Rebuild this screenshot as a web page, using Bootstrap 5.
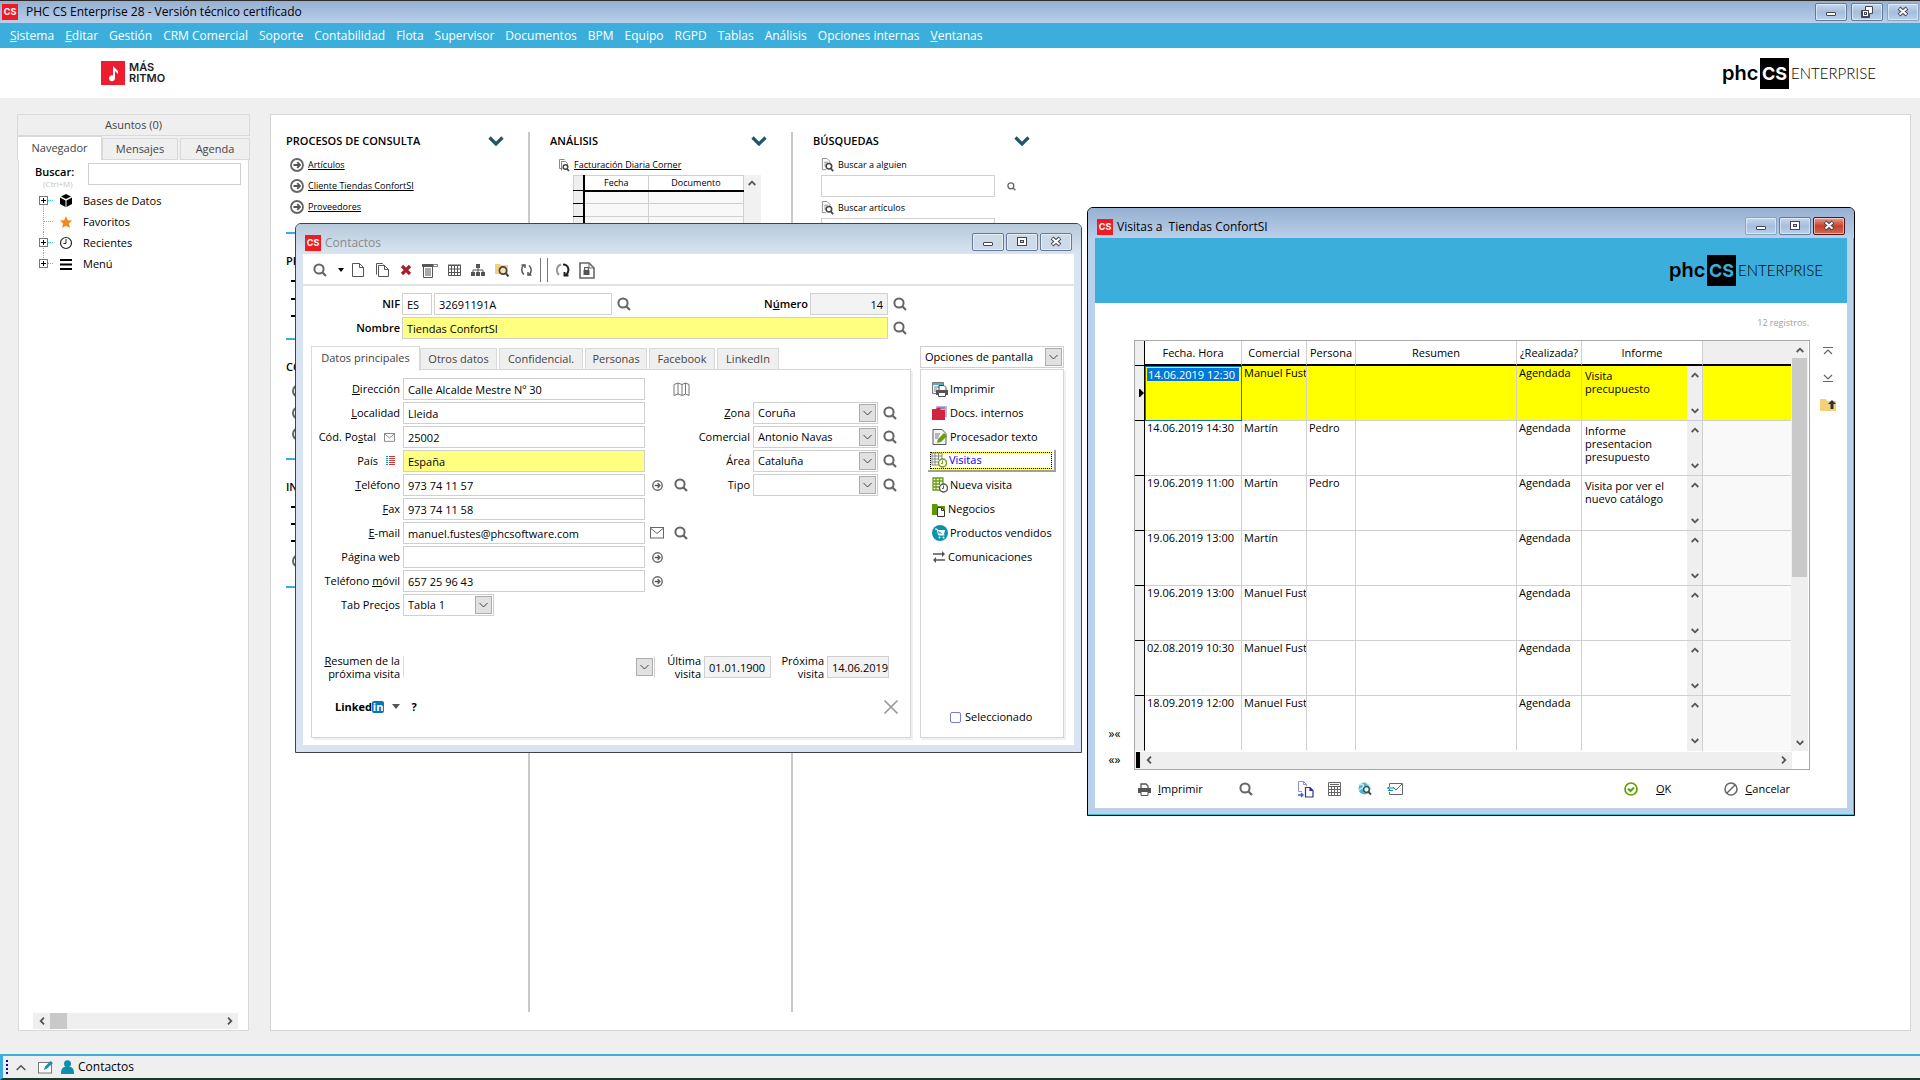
<!DOCTYPE html>
<html lang="es">
<head>
<meta charset="utf-8">
<meta name="viewport" content="width=device-width, initial-scale=1">
<title>PHC CS Enterprise 28</title>
<link rel="stylesheet" href="https://cdn.jsdelivr.net/npm/bootstrap@5.3.0/dist/css/bootstrap.min.css">
<style>
:root{--sky:#3caedc;--line:#d0d0d0;--pale:#efefef}
body{font-family:"Open Sans","Noto Sans",sans-serif;font-size:11px;line-height:14px;color:#000;background:var(--pale);border-top:1px solid #2c2c2c;min-height:100vh;overflow:hidden}
svg{display:block;flex:none}
a{color:#000}
.plain{border:0;background:none;padding:0;color:inherit;line-height:inherit;display:inline-flex;align-items:center;justify-content:center}
.titlebar{background:linear-gradient(#96b0d1,#b9cfeb)}
.app-title{height:22px;font-size:12px;padding:0 1px 0 2px}
.cs-mark{width:16px;height:16px;background:#ed1c24;color:#fff;font:bold 9px/16px Inter,sans-serif;text-align:center;flex:none}
.wbtn{width:32px;height:18px;border:1px solid #66799a;border-radius:2px;background:linear-gradient(#c5d8ee,#a5bedc 50%,#b8d0ea);padding:0;display:flex;align-items:center;justify-content:center;box-shadow:inset 0 0 0 1px #ffffff80}
.wbtn.soft{border-color:#8ba3c2}
.wbtn.red{background:linear-gradient(#e3a295,#c8402b 50%,#cf6a52);border-color:#5a1018}
.menubar{background:var(--sky);height:25px;font-size:12px;gap:11px;padding-left:10px}
.menubar a{color:#fff;text-decoration:none;white-space:nowrap}
.brandbar{height:50px;background:#fff;padding:0 43px 0 101px}
.note-tile{width:24px;height:24px;background:#ed1c2e}
.ritmo{font:600 11px/11px Inter,sans-serif;color:#222}
.phc{height:31px}
.phc-a{font:600 20px/31px Inter,sans-serif;width:38px}
.phc-b{width:29px;height:31px;background:#000;color:#fff;font:700 18px/31px Inter,sans-serif;text-align:center}
.phc-c{font:300 15px/31px Lato,sans-serif;padding-left:2px;width:88px}
.banner .phc-b{color:var(--sky)}

/* side navigator */
.side{width:233px;margin-left:17px}
.asuntos{height:22px;border:1px solid #d9d9d9;color:#444}
.tabx{border:1px solid #d9d9d9;background:var(--pale);color:#444;margin-top:2px;height:22px;padding:0;white-space:nowrap}
.tabx.on{background:#fff;border-bottom:0;margin-top:0;height:24px;padding-bottom:2px;margin-bottom:-1px;z-index:1;position:relative}
.side-tabs{height:24px}
.tab-m{width:76px;margin-right:2px}
.tab-a{width:70px}
.side-body{background:#fff;border:1px solid #d9d9d9;border-top:0;margin:0 1px}
.find-row{height:26px;padding:3px 7px 0 16px}
.find-row label{display:block;line-height:14px;padding-top:2px}
.hint{font-size:8px;line-height:9px;color:#c4c4c4;padding-left:8px}
.qbox{width:153px}
.boxed{border:1px solid var(--line);background:#fff;height:22px;padding:0 4px;line-height:20px;color:#000;border-radius:0;outline:0;min-width:0}
.yel{background:#ffff80}
.dim{background:#f3f3f3}
.tree{padding:4px 0 0 20px}
.tree-row{height:21px}
.tree-row .tw{width:20px}
.tree-row .ic{width:24px}
.hscroll{background:var(--pale);height:16px}
.hscroll button{width:17px;height:16px}
.hthumb{width:17px;background:#c9c9c9}
.side-scroll{margin:0 10px 1px 14px}

/* desktop panel */
.work{padding:16px 0 23px}
.desk{background:#fff;border:1px solid #d6d6d6;margin:0 9px 0 20px;padding:17px 15px 18px}
.dcol{width:242px}
.dcol+.dcol{border-left:2px solid #c9c9c9;width:263px;padding-left:20px}
.dhead{height:18px;font-weight:600}
.dlink{font-size:9px;height:21px;gap:4px}
.rule{border-top:2px solid var(--sky);width:200px}
.sect{padding-top:18px}
.sect .dhead{line-height:18px}
.sect-a{height:106px;margin-top:15px}
.sect-b{height:120px}
.sect-c{height:128px}
.bq{width:174px}
.mini{width:187px;table-layout:fixed;border:1px solid #b5b5b5;border-collapse:collapse;font-size:9px;margin-left:15px}
.mini th{font-weight:400;text-align:center;height:15px;line-height:13px;padding:0;border:1px solid var(--line);border-bottom:2px solid #000}
.mini td{height:13px;line-height:11px;padding:0;border:1px solid var(--line);background:#f8f8f8}
.mini .rh{border-right:2px solid #000;background:var(--pale);border-bottom:1px solid #000}
.mini .sc{background:#f1f1f1;border-color:#f1f1f1;border-bottom-width:1px}

/* floating windows */
.win{position:absolute;border-radius:6px 6px 0 0}
.wt{height:30px;border-radius:5px 5px 0 0;font-size:12px;padding:0 9px}
.wt .cs-mark,.wt>span{margin-top:8px}
.wbs{gap:2px;padding-top:5px}
.client{background:#fff;margin:0 7px 7px}
.w-contact{left:295px;top:223px;width:787px;border:1px solid #3f4348;background:#d8e4f1}
.w-contact .wt{background:linear-gradient(#b8c9db,#d8e4f1);color:#8b8b8b}
.w-contact .wbtn{background:#cddaea}
.w-contact .client{padding-bottom:7px}
.w-visit{left:1087px;top:207px;width:768px;border:1px solid #000;background:#b9d1ea;box-shadow:inset -1px -1px 0 #2cc6d8}

/* contact window */
.tools{height:32px;border-bottom:2px solid #e3e3e3;padding:2px 0 0 5px}
.tools .plain{width:24px;height:24px}
.tools .car{width:10px;margin-left:4px}
.vbars{width:8px;height:24px;border:solid #777;border-width:0 1px;margin:0 3px 0 2px}
.head-f{padding:6px 162px 0 0}
.hd-row{height:24px}
.hd-row .lab{width:99px;text-align:right;padding-right:2px;font-weight:600}
.ibtn{width:24px;height:22px}
.nif0{width:30px;margin-right:2px}
.nif1{width:178px}
.num{width:78px}
.body-f{padding:6px 10px 0 8px;gap:9px}
.maincol{width:600px}
.ctabs{height:24px;gap:2px;margin-bottom:-1px}
.ctabs .tabx.on{height:25px;margin-right:-2px}
.t1{width:109px}.t2{width:77px}.t3{width:84px}.t4{width:62px}.t5{width:66px}
.pane{border:1px solid #d5d5d5;box-shadow:2px 2px 0 #f0f0f0}
.pane-m{padding-top:8px}
.frow{height:22px;margin-bottom:2px}
.frow .lab{width:91px;padding-right:3px;display:flex;justify-content:flex-end;align-items:center;white-space:nowrap}
.frow .boxed{width:242px}
.frow .w-sm{width:91px}
.lcol{width:384px}
.rcol{padding-top:24px}
.rcol .lab{width:57px}
.rcol .boxed{width:125px}
.li{margin:0 5px 0 8px}
select.dd{appearance:none;background:#fff url("data:image/svg+xml,%3Csvg xmlns='http://www.w3.org/2000/svg' width='17' height='18'%3E%3Crect x='.5' y='.5' width='16' height='17' fill='%23e1e1e1' stroke='%23adadad'/%3E%3Cpath d='M4.500 7l4 4 4-4' fill='none' stroke='%23444'/%3E%3C/svg%3E") no-repeat right 1px center}
.vrow{margin-top:35px;height:28px}
.vrow label{text-align:right;line-height:13px;padding-right:3px}
.l1{width:91px}.l2{width:49px}.l3{width:56px}
.v1{width:252px;border-color:transparent var(--line) transparent #ddd}
.v2{width:67px}
.v3{width:62px;padding:0 0 0 4px}
.lrow{height:56px;padding:0 11px 5px 23px}
.lin{font-weight:700;text-decoration:none}
.lin span{background:#0a76b7;color:#fff;border-radius:2px;width:12px;height:12px;line-height:11px;text-align:center}
.lrow .q{font-weight:700;width:12px}
.optcol{width:144px}
.optsel{margin-bottom:1px}
.optpane{padding-top:8px}
.opt{height:22px;margin:0 7px 2px 7px;padding:0 0 0 3px;gap:2px;border:1px solid transparent;background:none;color:#000;text-align:left;display:flex;align-items:center;white-space:nowrap}
.opt.on{color:#0000f0;border:0;border-right:2px solid #a0a0a0;border-bottom:2px solid #a0a0a0;padding:2px}
.opt.on span{border:1px dotted #000;background:linear-gradient(#fff,#fff) padding-box,#ff0 border-box;height:17px;gap:2px;width:100%}
.opt .oi{width:16px}
.opt .oi-s{width:14px}
.sel-l{padding:0 0 13px 29px}
.cbx{width:11px;height:11px;margin:0;appearance:none;border:1px solid #7b7bd8;border-radius:2px;background:#fff}

/* visits window */
.banner{background:var(--sky);height:65px;padding:17px 23px 0 0}
.regs{font-size:9px;color:#a0a0a0;height:37px;padding:13px 38px 0 0}
.lside{width:39px;padding:0 0 3px;gap:12px}
.lside .plain{font-size:12px}
.gridbox{border:1px solid #a8a8a8;width:676px}
.vis{width:656px;table-layout:fixed;border-collapse:separate;border-spacing:0}
.vis th{font-weight:400;text-align:center;height:25px;padding:0;border-right:1px solid var(--line);border-bottom:2px solid #000;white-space:nowrap}
.vis td{height:55px;padding:0 0 0 2px;border-right:1px solid var(--line);border-bottom:1px solid var(--line);vertical-align:top;overflow:hidden;white-space:nowrap}
.vis .rh{background:var(--pale);border-right:1px solid #000;border-bottom:1px solid #000;padding:0;vertical-align:middle}
.vis .inf{white-space:normal;padding:3px 12px 0 3px;line-height:13px;border-right:0}
.vis .sc{background:var(--pale);padding:0}
.vis .sc .plain{width:15px;height:17px;margin:0 0 20px;display:flex}
.vis .sc .plain+.plain{margin:0;height:16px}
.vis .void{background:#f9f9f9;border-right:0}
.vis th.void{background:var(--pale)}
.vis tr.sel td:not(.rh):not(.sc){background:#ff0}
.vis tr:last-child td{border-bottom-color:transparent}
.vis tr.sel .cur{outline:1px solid #0a6fcb;outline-offset:-1px;padding:2px 2px 0}
.cur mark{background:#0078d7;color:#fff;padding:0 1px;display:block;line-height:13px}
.vbar{width:17px;background:var(--pale)}
.vbar .thumb{width:15px;height:219px;background:#c9c9c9}
.vbar .plain{width:16px;height:17px}
.gscroll{width:657px;height:17px;margin-top:1px;padding:0 0 1px 1px}
.bthumb{width:4px;background:#000}
.rside{width:36px;padding:3px 0 0;gap:11px}
.rside .plain{height:16px}
.vfoot{height:38px}
.vfoot .plain{height:22px}
.vfoot span{white-space:nowrap}
.b1{gap:7px;margin-left:43px}
.b2{margin-left:36px}.b3{margin-left:44px}.b4{margin-left:14px}.b5{margin-left:17px}.b6{margin-left:15px}
.b7{gap:18px}
.b8{gap:7px;margin:0 57px 0 53px}

/* task bar */
.task{border-top:2px solid var(--sky);border-left:3px solid var(--sky);border-bottom:2px solid #163a2b;height:26px;font-size:12px;background:var(--pale);padding-left:3px}
.task .plain{margin-left:8px}
</style>
</head>
<body class="d-flex flex-column">
<svg width="0" height="0" class="position-absolute" aria-hidden="true">
<symbol id="i-search" viewBox="0 0 14 14"><circle cx="6" cy="6" r="4.600" fill="none" stroke="#666" stroke-width="2"/><path d="M9.500 9.500l3.500 3.500" stroke="#666" stroke-width="2.200"/></symbol>
<symbol id="i-goto" viewBox="0 0 14 14"><circle cx="7" cy="7" r="6" fill="none" stroke="#666" stroke-width="1.800"/><path d="M3.500 7h6M7.200 4.200L10 7 7.200 9.800" fill="none" stroke="#555" stroke-width="1.800"/></symbol>
<symbol id="i-chev" viewBox="0 0 16 10"><path d="M1.500 1.500L8 8l6.500-6.500" fill="none" stroke="#1f566b" stroke-width="3.200"/></symbol>
<symbol id="i-up" viewBox="0 0 8 6"><path d="M.7 5L4 1.700 7.300 5" fill="none" stroke="#555" stroke-width="1.800"/></symbol>
<symbol id="i-down" viewBox="0 0 8 6"><path d="M.7 1L4 4.300 7.300 1" fill="none" stroke="#555" stroke-width="1.800"/></symbol>
<symbol id="i-left" viewBox="0 0 6 8"><path d="M5 .7L1.700 4 5 7.300" fill="none" stroke="#555" stroke-width="1.800"/></symbol>
<symbol id="i-right" viewBox="0 0 6 8"><path d="M1 .7L4.300 4 1 7.300" fill="none" stroke="#555" stroke-width="1.800"/></symbol>
<symbol id="w-min" viewBox="0 0 12 12"><rect x="1.500" y="6.500" width="9" height="3" rx=".5" fill="#fff" stroke="#445" /></symbol>
<symbol id="w-max" viewBox="0 0 12 12"><rect x="1.500" y="1.500" width="9" height="8" fill="#fff" stroke="#445"/><rect x="4.500" y="4.500" width="3" height="2" fill="#b5c8e0" stroke="#445"/></symbol>
<symbol id="w-res" viewBox="0 0 12 12"><path d="M4.500.5h7v7h-3v4h-8v-7h4z" fill="#fff" stroke="#445"/><rect x="1.500" y="4.500" width="6" height="6" fill="#fff" stroke="#445"/><rect x="3.500" y="6.500" width="2" height="2" fill="none" stroke="#445"/></symbol>
<symbol id="w-x" viewBox="0 0 12 12"><path d="M2 2l8 7M10 2l-8 7" stroke="#445" stroke-width="4"/><path d="M2.500 2.500l7 6M9.500 2.500l-7 6" stroke="#fff" stroke-width="2"/></symbol>
<symbol id="i-mail" viewBox="0 0 14 12"><rect x=".5" y=".5" width="13" height="10.500" fill="none" stroke="#666"/><path d="M1 1.500l6 5 6-5" fill="none" stroke="#666"/></symbol>
<symbol id="i-plus" viewBox="0 0 9 9"><rect x=".5" y=".5" width="8" height="8" fill="#fff" stroke="#777"/><path d="M2 4.500h5M4.500 2v5" stroke="#000"/></symbol>
<symbol id="i-finddoc" viewBox="0 0 14 15"><path d="M9.500 6V3.500L6.500.5h-5v12h4" fill="none" stroke="#888"/><path d="M3.500 4.500h4M3.500 6.500h3M3.500 8.500h2" stroke="#888"/><circle cx="8.500" cy="8.800" r="3" fill="#fff" stroke="#444" stroke-width="1.700"/><path d="M10.500 11l2.500 3" stroke="#444" stroke-width="2"/></symbol>
<symbol id="i-folder" viewBox="0 0 16 14"><path d="M0 1h6l1 2h9v10H0z" fill="#f4d07a"/></symbol>
</svg>

<header>
  <div class="titlebar app-title d-flex align-items-center">
    <span class="cs-mark" aria-hidden="true">CS</span><span class="ps-2 me-auto">PHC CS Enterprise 28 - Versión técnico certificado</span>
    <div class="d-flex gap-1">
      <button class="wbtn" aria-label="Minimizar"><svg width="12" height="12"><use href="#w-min"/></svg></button>
      <button class="wbtn" aria-label="Restaurar"><svg width="12" height="12"><use href="#w-res"/></svg></button>
      <button class="wbtn soft" aria-label="Cerrar"><svg width="12" height="12"><use href="#w-x"/></svg></button>
    </div>
  </div>
  <nav class="menubar d-flex align-items-center">
    <a href="#"><u>S</u>istema</a><a href="#"><u>E</u>ditar</a><a href="#">Gestión</a><a href="#">CRM Comercial</a><a href="#">Soporte</a><a href="#">Contabilidad</a><a href="#">Flota</a><a href="#">Supervisor</a><a href="#">Documentos</a><a href="#">BPM</a><a href="#">Equipo</a><a href="#">RGPD</a><a href="#">Tablas</a><a href="#">Análisis</a><a href="#">Opciones internas</a><a href="#"><u>V</u>entanas</a>
  </nav>
  <div class="brandbar d-flex align-items-center justify-content-between">
    <div class="d-flex align-items-center gap-1">
      <span class="note-tile"><svg width="24" height="24" viewBox="0 0 24 24"><path d="M12 5l5 5v3l-3-3v7a3 3 0 1 1-2-2.500z" fill="#fff"/></svg></span>
      <span class="ritmo">MÁS<br>RITMO</span>
    </div>
    <div class="phc d-flex"><span class="phc-a">phc</span><span class="phc-b">CS</span><span class="phc-c">ENTERPRISE</span></div>
  </div>
</header>

<main class="work d-flex flex-grow-1">
  <aside class="side d-flex flex-column">
    <div class="asuntos d-flex align-items-center justify-content-center">Asuntos (0)</div>
    <div class="side-tabs d-flex">
      <button class="tabx on flex-grow-1">Navegador</button><button class="tabx tab-m">Mensajes</button><button class="tabx tab-a">Agenda</button>
    </div>
    <div class="side-body flex-grow-1 d-flex flex-column">
      <div class="find-row d-flex">
        <div><label for="q" class="fw-semibold">Buscar:</label><div class="hint">(Ctrl+M)</div></div>
        <input id="q" class="boxed ms-auto qbox">
      </div>
      <div class="tree">
        <div class="tree-row d-flex align-items-center"><span class="tw"><svg width="22" height="21" viewBox="0 0 22 21"><path d="M4.500 10.500V21M9 10.500h6" stroke="#19d8e8" stroke-dasharray="1 1"/><use href="#i-plus" y="6" width="9" height="9"/></svg></span><span class="ic"><svg width="14" height="14" viewBox="0 0 14 14"><path d="M7 0l5 2.500L7 5 2 2.500zM1 3.500l5.500 3V13L1 10zM13 3.500l-5.500 3V13l5.500-3z"/></svg></span>Bases de Datos</div>
        <div class="tree-row d-flex align-items-center"><span class="tw"><svg width="22" height="21" viewBox="0 0 22 21"><path d="M4.500 0V21M5 10.500h10" stroke="#19d8e8" stroke-dasharray="1 1"/></svg></span><span class="ic"><svg width="14" height="14" viewBox="0 0 14 14"><path d="M7 1l1.800 4.200 4.500.4-3.400 3 1 4.400L7 10.700 3.100 13l1-4.400-3.400-3 4.500-.4z" fill="#f08a1d"/></svg></span>Favoritos</div>
        <div class="tree-row d-flex align-items-center"><span class="tw"><svg width="22" height="21" viewBox="0 0 22 21"><path d="M4.500 0V21M9 10.500h6" stroke="#19d8e8" stroke-dasharray="1 1"/><use href="#i-plus" y="6" width="9" height="9"/></svg></span><span class="ic"><svg width="14" height="14" viewBox="0 0 14 14"><circle cx="7" cy="7" r="5.500" fill="none" stroke="#222" stroke-width="1.200"/><path d="M7 3v4.500H4.500" fill="none" stroke="#222"/></svg></span>Recientes</div>
        <div class="tree-row d-flex align-items-center"><span class="tw"><svg width="22" height="21" viewBox="0 0 22 21"><path d="M4.500 0V10M9 10.500h6" stroke="#19d8e8" stroke-dasharray="1 1"/><use href="#i-plus" y="6" width="9" height="9"/></svg></span><span class="ic"><svg width="14" height="14" viewBox="0 0 14 14"><path d="M1 3h12M1 7.500h12M1 12h12" stroke="#000" stroke-width="2"/></svg></span>Menú</div>
      </div>
      <div class="hscroll side-scroll d-flex mt-auto" aria-hidden="true"><button class="plain" tabindex="-1"><svg width="6" height="8"><use href="#i-left"/></svg></button><span class="hthumb"></span><button class="plain ms-auto" tabindex="-1"><svg width="6" height="8"><use href="#i-right"/></svg></button></div>
    </div>
  </aside>

  <section class="desk flex-grow-1 d-flex">
    <div class="dcol">
      <div class="dhead d-flex justify-content-between align-items-center"><span>PROCESOS DE CONSULTA</span><svg class="me-4" width="16" height="10"><use href="#i-chev"/></svg></div>
      <div class="ps-1 pt-1">
        <div class="dlink d-flex align-items-center"><svg width="14" height="14"><use href="#i-goto"/></svg><a href="#">Artículos</a></div>
        <div class="dlink d-flex align-items-center"><svg width="14" height="14"><use href="#i-goto"/></svg><a href="#">Cliente Tiendas ConfortSI</a></div>
        <div class="dlink d-flex align-items-center"><svg width="14" height="14"><use href="#i-goto"/></svg><a href="#">Proveedores</a></div>
      </div>
      <div class="rule sect sect-a"><div class="dhead">PR</div><svg width="12" height="60" viewBox="0 0 12 60"><path d="M5 11h7M5 29h7M5 46h7" stroke="#000" stroke-width="2"/></svg></div>
      <div class="rule sect sect-b"><div class="dhead">CO</div><svg width="20" height="74" viewBox="0 0 20 74"><g fill="none" stroke="#666" stroke-width="2"><circle cx="13" cy="15" r="6"/><circle cx="13" cy="37" r="6"/><circle cx="13" cy="58" r="6"/></g></svg></div>
      <div class="rule sect sect-c"><div class="dhead">IN</div><svg width="20" height="74" viewBox="0 0 20 74"><path d="M5 11h7M5 28h7M5 45h7" stroke="#000" stroke-width="2"/><circle cx="13" cy="65" r="6" fill="none" stroke="#666" stroke-width="2"/></svg></div>
      <div class="rule"></div>
    </div>
    <div class="dcol">
      <div class="dhead d-flex justify-content-between align-items-center"><span>ANÁLISIS</span><svg class="me-4" width="16" height="10"><use href="#i-chev"/></svg></div>
      <div class="ps-2 pt-1">
        <div class="dlink d-flex align-items-center"><svg width="12" height="14" viewBox="0 0 12 14"><path d="M4.500 10.500h-3v-9h5" fill="none" stroke="#888"/><path d="M3.500 12.500v-9h4l2 2v2" fill="none" stroke="#888"/><circle cx="7.500" cy="9" r="2.300" fill="none" stroke="#444" stroke-width="1.400"/><path d="M9 11l2 2" stroke="#444" stroke-width="1.700"/></svg><a href="#">Facturación Diaria Corner</a></div>
        <table class="mini">
          <colgroup><col width="10"><col width="65"><col width="95"><col width="17"></colgroup>
          <thead><tr><th class="rh"></th><th>Fecha</th><th>Documento</th><th class="sc"><svg class="mx-auto" width="8" height="6"><use href="#i-up"/></svg></th></tr></thead>
          <tbody><tr><td class="rh"></td><td></td><td></td><td class="sc"></td></tr><tr><td class="rh"></td><td></td><td></td><td class="sc"></td></tr><tr><td class="rh"></td><td></td><td></td><td class="sc"></td></tr></tbody>
        </table>
      </div>
    </div>
    <div class="dcol">
      <div class="dhead d-flex justify-content-between align-items-center"><span>BÚSQUEDAS</span><svg class="me-4" width="16" height="10"><use href="#i-chev"/></svg></div>
      <div class="ps-2 pt-1">
        <div class="dlink d-flex align-items-center"><svg width="13" height="14"><use href="#i-finddoc"/></svg><label for="b1">Buscar a alguien</label></div>
        <div class="d-flex align-items-center"><input id="b1" class="boxed bq"><button class="plain ms-1 ibtn" aria-label="Buscar"><svg width="9" height="9"><use href="#i-search"/></svg></button></div>
        <div class="dlink d-flex align-items-center"><svg width="13" height="14"><use href="#i-finddoc"/></svg><label for="b2">Buscar artículos</label></div>
        <input id="b2" class="boxed bq">
      </div>
    </div>
  </section>
</main>

<footer class="task d-flex align-items-center">
  <svg width="2" height="14" viewBox="0 0 2 14"><path d="M1 0v14" stroke="#00c" stroke-width="2" stroke-dasharray="2 2"/></svg>
  <button class="plain" aria-label="Mostrar"><svg width="10" height="7" viewBox="0 0 10 7"><path d="M.7 6L5 1.700 9.300 6" fill="none" stroke="#555" stroke-width="1.500"/></svg></button>
  <button class="plain ps-1" aria-label="Editar"><svg width="15" height="14" viewBox="0 0 15 14"><rect x=".5" y="2.500" width="13" height="10.500" fill="#fff" stroke="#777"/><path d="M6 10l1-3.500L12.500 1 15 3 9 8.500z" fill="#1a93b3"/></svg></button>
  <button class="plain gap-1"><svg width="13" height="14" viewBox="0 0 13 14"><circle cx="6.500" cy="3.800" r="3.500" fill="#0b8fb0"/><path d="M0 14c0-5 1.500-7 4-7h5c2.500 0 4 2 4 7z" fill="#0b8fb0"/></svg><span>Contactos</span></button>
</footer>

<section class="win w-contact" aria-label="Contactos">
  <div class="wt d-flex align-items-center">
    <span class="cs-mark" aria-hidden="true">CS</span><span class="ps-1 me-auto">Contactos</span>
    <div class="wbs d-flex"><button class="wbtn" aria-label="Minimizar"><svg width="12" height="12"><use href="#w-min"/></svg></button><button class="wbtn" aria-label="Maximizar"><svg width="12" height="12"><use href="#w-max"/></svg></button><button class="wbtn" aria-label="Cerrar"><svg width="12" height="12"><use href="#w-x"/></svg></button></div>
  </div>
  <div class="client">
    <div class="tools d-flex align-items-center">
      <button class="plain" aria-label="Buscar"><svg width="14" height="14"><use href="#i-search"/></svg></button>
      <button class="plain car" aria-label="Más"><svg width="6" height="4" viewBox="0 0 6 4"><path d="M0 0h6L3 4z"/></svg></button>
      <button class="plain" aria-label="Nuevo"><svg width="14" height="16" viewBox="0 0 14 16"><path d="M1.500 1.500h7l4 4v9h-11zM8.500 1.500v4h4" fill="none" stroke="#555"/></svg></button>
      <button class="plain" aria-label="Copiar"><svg width="14" height="16" viewBox="0 0 14 16"><path d="M3.500 3.500h6l4 4v7h-10zM9.500 3.500v4h4M1.500 12.500v-11h6l1 1" fill="none" stroke="#555"/></svg></button>
      <button class="plain" aria-label="Eliminar"><svg width="12" height="12" viewBox="0 0 12 12"><path d="M2 2l8 8M10 2l-8 8" stroke="#a8202c" stroke-width="3.200"/></svg></button>
      <button class="plain" aria-label="Lista"><svg width="16" height="15" viewBox="0 0 16 15"><path d="M1.500 3.500v11h9v-11" fill="#fff" stroke="#555"/><path d="M0 1h11v3H0z" fill="#555"/><path d="M3 6h6M3 8h6M3 10h6M3 12h6" stroke="#555"/><rect x="11.500" y="1.500" width="4" height="2" fill="#fff" stroke="#888"/></svg></button>
      <button class="plain" aria-label="Tabla"><svg width="13" height="12" viewBox="0 0 13 12"><path d="M.5 1.500h12v10H.5zM.5 5h12M.5 8.500h12M3.500 2v9M6.500 2v9M9.500 2v9M0 1h13" fill="none" stroke="#555"/></svg></button>
      <button class="plain" aria-label="Jerarquía"><svg width="14" height="14" viewBox="0 0 14 14"><path d="M5 1h4v4H5zM0 9h4v4H0zM5 9h4v4H5zM10 9h4v4h-4z" fill="#555"/><path d="M7 4v5M2 9V7h10v2" fill="none" stroke="#555"/></svg></button>
      <button class="plain" aria-label="Buscar en carpeta"><svg width="15" height="14" viewBox="0 0 15 14"><path d="M0 1h5l1 1h7v9H0z" fill="#f4d07a"/><circle cx="8" cy="7.500" r="3.600" fill="#f8e4ae" stroke="#444" stroke-width="1.700"/><path d="M10.500 10l3 3.500" stroke="#444" stroke-width="2"/></svg></button>
      <button class="plain" aria-label="Actualizar"><svg width="13" height="14" viewBox="0 0 13 14"><path d="M4 11.500C1 9 1 4.500 4 2M1.500 2H5v3M9 2.500c3 2.500 3 6.500 0 9.500M11.500 12H8V9" fill="none" stroke="#555" stroke-width="1.500"/></svg></button>
      <span class="vbars"></span>
      <button class="plain" aria-label="Sincronizar"><svg width="14" height="14" viewBox="0 0 14 14"><path d="M5 1.500C0 3 0 9 3 12" fill="none" stroke="#999" stroke-width="2"/><path d="M7 1.500c6 0 7 7 3 10.500M12.500 12.500H8.500V9" fill="none" stroke="#222" stroke-width="2"/></svg></button>
      <button class="plain" aria-label="Bloquear"><svg width="16" height="17" viewBox="0 0 16 17"><path d="M1 1h9l5 5v10H1z" fill="#fff" stroke="#666" stroke-width="1.600"/><path d="M10 1v5h5" fill="none" stroke="#666"/><path d="M4.500 8h6v5h-6z" fill="#555"/><path d="M5.700 8V5.500h3.600V8" fill="none" stroke="#555" stroke-width="1.200"/></svg></button>
    </div>
    <div class="head-f">
      <div class="hd-row d-flex align-items-center"><label class="lab" for="nif">NIF</label><input class="boxed nif0" aria-label="País NIF" value="ES"><input id="nif" class="boxed nif1" value="32691191A"><button class="plain ibtn" aria-label="Buscar NIF"><svg width="14" height="14"><use href="#i-search"/></svg></button>
        <label class="lab ms-auto" for="num">N<u>ú</u>mero</label><input id="num" class="boxed dim num text-end pe-1" value="14"><button class="plain ibtn" aria-label="Buscar número"><svg width="14" height="14"><use href="#i-search"/></svg></button></div>
      <div class="hd-row d-flex align-items-center"><label class="lab" for="nom">Nombre</label><input id="nom" class="boxed yel flex-grow-1" value="Tiendas ConfortSI"><button class="plain ibtn" aria-label="Buscar nombre"><svg width="14" height="14"><use href="#i-search"/></svg></button></div>
    </div>
    <div class="d-flex body-f">
      <div class="maincol">
        <div class="ctabs d-flex"><button class="tabx on t1">Datos principales</button><button class="tabx t2">Otros datos</button><button class="tabx t3">Confidencial.</button><button class="tabx t4">Personas</button><button class="tabx t5">Facebook</button><button class="tabx t4">LinkedIn</button></div>
        <div class="pane pane-m">
          <div class="d-flex">
            <div class="lcol">
              <div class="frow d-flex"><label class="lab" for="f1"><span><u>D</u>irección</span></label><input id="f1" class="boxed" value="Calle Alcalde Mestre Nº 30"><span class="ibtn"></span><button class="plain ibtn" aria-label="Mapa"><svg width="17" height="15" viewBox="0 0 17 15"><path d="M1 2.500l4-1.500 4 1.500L12.500 1 16 2.500v11L12.500 12 9 13.500 5 12l-4 1.500zM5 1v11M9 2.500v11M12.500 1v11" fill="none" stroke="#777"/></svg></button></div>
              <div class="frow d-flex"><label class="lab" for="f2"><span><u>L</u>ocalidad</span></label><input id="f2" class="boxed" value="Lleida"></div>
              <div class="frow d-flex"><label class="lab" for="f3"><span>Cód. Po<u>s</u>tal</span><svg class="li" width="11" height="9"><use href="#i-mail"/></svg></label><input id="f3" class="boxed" value="25002"></div>
              <div class="frow d-flex"><label class="lab" for="f4"><span>País</span><svg class="li" width="9" height="10" viewBox="0 0 9 10"><path d="M0 .5h2M0 2.500h2M0 4.500h2M0 6.500h2M0 8.500h2" stroke="#1a93b3"/><path d="M3 .5h6M3 2.500h6M3 4.500h6M3 6.500h6M3 8.500h6" stroke="#c43a3a"/></svg></label><input id="f4" class="boxed yel" value="España"></div>
              <div class="frow d-flex"><label class="lab" for="f5"><span><u>T</u>eléfono</span></label><input id="f5" class="boxed" value="973 74 11 57"><button class="plain ibtn" aria-label="Llamar"><svg width="11" height="11"><use href="#i-goto"/></svg></button><button class="plain ibtn" aria-label="Buscar"><svg width="14" height="14"><use href="#i-search"/></svg></button></div>
              <div class="frow d-flex"><label class="lab" for="f6"><span><u>F</u>ax</span></label><input id="f6" class="boxed" value="973 74 11 58"></div>
              <div class="frow d-flex"><label class="lab" for="f7"><span><u>E</u>-mail</span></label><input id="f7" class="boxed" value="manuel.fustes@phcsoftware.com"><button class="plain ibtn" aria-label="Enviar"><svg width="14" height="12"><use href="#i-mail"/></svg></button><button class="plain ibtn" aria-label="Buscar"><svg width="14" height="14"><use href="#i-search"/></svg></button></div>
              <div class="frow d-flex"><label class="lab" for="f8"><span>Página web</span></label><input id="f8" class="boxed"><button class="plain ibtn" aria-label="Abrir"><svg width="11" height="11"><use href="#i-goto"/></svg></button></div>
              <div class="frow d-flex"><label class="lab" for="f9"><span>Teléfono <u>m</u>óvil</span></label><input id="f9" class="boxed" value="657 25 96 43"><button class="plain ibtn" aria-label="Llamar"><svg width="11" height="11"><use href="#i-goto"/></svg></button></div>
              <div class="frow d-flex"><label class="lab" for="f10"><span>Tab Prec<u>i</u>os</span></label><select id="f10" class="boxed dd w-sm"><option>Tabla 1</option></select></div>
            </div>
            <div class="rcol">
              <div class="frow d-flex"><label class="lab" for="r1"><span><u>Z</u>ona</span></label><select id="r1" class="boxed dd"><option>Coruña</option></select><button class="plain ibtn" aria-label="Buscar"><svg width="14" height="14"><use href="#i-search"/></svg></button></div>
              <div class="frow d-flex"><label class="lab" for="r2">Comercial</label><select id="r2" class="boxed dd"><option>Antonio Navas</option></select><button class="plain ibtn" aria-label="Buscar"><svg width="14" height="14"><use href="#i-search"/></svg></button></div>
              <div class="frow d-flex"><label class="lab" for="r3">Área</label><select id="r3" class="boxed dd"><option>Cataluña</option></select><button class="plain ibtn" aria-label="Buscar"><svg width="14" height="14"><use href="#i-search"/></svg></button></div>
              <div class="frow d-flex"><label class="lab" for="r4">Tipo</label><select id="r4" class="boxed dd"><option></option></select><button class="plain ibtn" aria-label="Buscar"><svg width="14" height="14"><use href="#i-search"/></svg></button></div>
            </div>
          </div>
          <div class="vrow d-flex align-items-center">
            <label class="l1" for="v1"><u>R</u>esumen de la<br>próxima visita</label><select id="v1" class="boxed dd v1"><option></option></select>
            <label class="l2" for="v2">Última<br>visita</label><input id="v2" class="boxed dim v2" value="01.01.1900">
            <label class="l3" for="v3">Próxima<br>visita</label><input id="v3" class="boxed dim v3" value="14.06.2019">
          </div>
          <div class="lrow d-flex align-items-center">
            <a class="lin d-flex align-items-center" href="#">Linked<span>in</span></a>
            <button class="plain ibtn" aria-label="Opciones de LinkedIn"><svg width="8" height="5" viewBox="0 0 8 5"><path d="M0 0h8L4 5z" fill="#555"/></svg></button>
            <button class="plain q">?</button>
            <button class="plain ms-auto" aria-label="Cerrar"><svg width="16" height="16" viewBox="0 0 16 16"><path d="M1.500 1.500l13 13M14.500 1.500l-13 13" stroke="#999" stroke-width="1.700"/></svg></button>
          </div>
        </div>
      </div>
      <div class="optcol d-flex flex-column">
        <select class="boxed dd optsel" aria-label="Opciones"><option>Opciones de pantalla</option></select>
        <div class="pane flex-grow-1 d-flex flex-column optpane">
          <button class="opt"><svg class="oi" width="16" height="16" viewBox="0 0 16 16"><path d="M.5 1.500h11v11H.5z" fill="#e9f4f8" stroke="#777"/><path d="M1 2h10v2H1z" fill="#4fb0c8"/><path d="M2 6h5M2 8h3M2 10h3" stroke="#888"/><path d="M7 9V4.500h5l2 2V9" fill="#fff" stroke="#444"/><path d="M4 9h12v5H4z" fill="#555"/><path d="M6.500 11.500h7v4h-7z" fill="#fff" stroke="#555"/></svg>Imprimir</button>
          <button class="opt"><svg class="oi" width="16" height="16" viewBox="0 0 16 16"><path d="M4 1h11v11H4z" fill="#b9b4dc"/><path d="M5 2h8v2H5z" fill="#8d88b8"/><path d="M0 4h4l1-1h3l1 2h4v10H0z" fill="#d0243f"/></svg>Docs. internos</button>
          <button class="opt"><svg class="oi" width="16" height="16" viewBox="0 0 16 16"><path d="M1 .5h9l4 4v11H1z" fill="#f4f4f4" stroke="#555"/><path d="M3 5h5M3 7h4M3 9h3" stroke="#777"/><path d="M5 14l1-4 6-6 3 3-6 6z" fill="#6a9d12"/></svg>Procesador texto</button>
          <button class="opt on"><span class="d-flex align-items-center"><svg class="oi" width="16" height="16" viewBox="0 0 16 16"><path d="M1 1h10v12H1zM1 4h10M1 7h7M1 10h6M4 1v12M7.500 1v7" fill="none" stroke="#888"/><circle cx="11.500" cy="11" r="4" fill="#fff" stroke="#6a9d12" stroke-width="1.400"/><path d="M11.500 8.500v3H10" fill="none" stroke="#6a9d12"/></svg>Visitas</span></button>
          <button class="opt"><svg class="oi" width="16" height="16" viewBox="0 0 16 16"><path d="M1 1h10v12H1zM1 4h10M1 7h7M1 10h6M4 1v12M7.500 1v7" fill="none" stroke="#6a9d12" stroke-width="1.300"/><circle cx="11.500" cy="11" r="4" fill="#fff" stroke="#555" stroke-width="1.400"/><path d="M11.500 8.500v3H10" fill="none" stroke="#555"/></svg>Nueva visita</button>
          <button class="opt"><svg class="oi oi-s" width="14" height="15" viewBox="0 0 14 15"><path d="M0 2h5l1 2h7v9H0z" fill="#5f9800"/><path d="M5.500 5.500h4l3 3v6h-7z" fill="#fff" stroke="#333"/><path d="M9.500 5.500v3h3" fill="none" stroke="#333"/></svg>Negocios</button>
          <button class="opt"><svg class="oi" width="16" height="16" viewBox="0 0 16 16"><circle cx="8" cy="8" r="8" fill="#0a93ae"/><path d="M3 4h2l1.500 6h6M5.500 5.500h7l-1 3.500h-5.200" fill="#fff" stroke="#fff"/><circle cx="7.500" cy="12.500" r="1" fill="#fff"/><circle cx="11.500" cy="12.500" r="1" fill="#fff"/></svg>Productos vendidos</button>
          <button class="opt"><svg class="oi oi-s" width="14" height="12" viewBox="0 0 14 12"><path d="M1 3h10M3 9h10" stroke="#555" stroke-width="1.300"/><path d="M10 0l3 3-3 3zM4 6L1 9l3 3z" fill="#555"/></svg>Comunicaciones</button>
          <label class="sel-l mt-auto d-flex align-items-center gap-1"><input type="checkbox" class="cbx">Seleccionado</label>
        </div>
      </div>
    </div>
  </div>
</section>

<section class="win w-visit" aria-label="Visitas">
  <div class="wt titlebar d-flex align-items-center">
    <span class="cs-mark" aria-hidden="true">CS</span><span class="ps-1 me-auto">Visitas a &nbsp;Tiendas ConfortSI</span>
    <div class="wbs d-flex"><button class="wbtn soft" aria-label="Minimizar"><svg width="12" height="12"><use href="#w-min"/></svg></button><button class="wbtn" aria-label="Maximizar"><svg width="12" height="12"><use href="#w-max"/></svg></button><button class="wbtn red" aria-label="Cerrar"><svg width="12" height="12"><use href="#w-x"/></svg></button></div>
  </div>
  <div class="client">
    <div class="banner d-flex justify-content-end"><div class="phc d-flex"><span class="phc-a">phc</span><span class="phc-b">CS</span><span class="phc-c">ENTERPRISE</span></div></div>
    <div class="regs text-end">12 registros.</div>
    <div class="d-flex">
      <div class="lside d-flex flex-column justify-content-end align-items-center"><button class="plain">»«</button><button class="plain">«»</button></div>
      <div class="gridbox">
        <div class="d-flex">
          <table class="vis">
            <colgroup><col width="10"><col width="97"><col width="65"><col width="49"><col width="161"><col width="65"><col width="105"><col width="16"><col></colgroup>
            <thead><tr><th class="rh"></th><th>Fecha. Hora</th><th>Comercial</th><th>Persona</th><th>Resumen</th><th>¿Realizada?</th><th colspan="2">Informe</th><th class="void"></th></tr></thead>
            <tbody id="rows"></tbody>
          </table>
          <div class="vbar d-flex flex-column align-items-center" aria-hidden="true"><button class="plain" tabindex="-1"><svg width="8" height="6"><use href="#i-up"/></svg></button><span class="thumb"></span><button class="plain mt-auto" tabindex="-1"><svg width="8" height="6"><use href="#i-down"/></svg></button></div>
        </div>
        <div class="hscroll d-flex gscroll" aria-hidden="true"><span class="bthumb"></span><button class="plain" tabindex="-1"><svg width="6" height="8"><use href="#i-left"/></svg></button><button class="plain ms-auto" tabindex="-1"><svg width="6" height="8"><use href="#i-right"/></svg></button></div>
      </div>
      <div class="rside d-flex flex-column">
        <button class="plain" aria-label="Primero"><svg width="10" height="8" viewBox="0 0 10 8"><path d="M0 .5h10M1 7l4-4 4 4" fill="none" stroke="#666" stroke-width="1.200"/></svg></button>
        <button class="plain" aria-label="Último"><svg width="10" height="8" viewBox="0 0 10 8"><path d="M0 7.500h10M1 1l4 4 4-4" fill="none" stroke="#666" stroke-width="1.200"/></svg></button>
        <button class="plain" aria-label="Subir carpeta"><svg width="16" height="14" viewBox="0 0 16 14"><use href="#i-folder"/><path d="M12 2l4 4h-2.500v5h-3V6H8z" fill="#333"/></svg></button>
      </div>
    </div>
    <div class="vfoot d-flex align-items-center">
      <button class="plain b1"><svg width="13" height="13" viewBox="0 0 13 13"><path d="M3 5V1h5l2 2v2" fill="#fff" stroke="#555" stroke-width="1.300"/><path d="M0 5h13v5H0z" fill="#555"/><path d="M3 8.500h7v4H3z" fill="#fff" stroke="#555"/></svg><span><u>I</u>mprimir</span></button>
      <button class="plain b2" aria-label="Buscar"><svg width="14" height="14"><use href="#i-search"/></svg></button>
      <button class="plain b3" aria-label="Copiar"><svg width="17" height="17" viewBox="0 0 17 17"><path d="M5 10.500H1.500V.5h5l3 3V5M6.500.5v3h3" fill="none" stroke="#8d8fe0"/><path d="M8.500 6.500h4.500l3 3v6.500H8.500zM13 6.500v3h3" fill="#fff" stroke="#2c3290" stroke-width="1.200"/><path d="M1 14h5M4 12l2 2-2 2" fill="none" stroke="#3a62c0" stroke-width="1.300"/></svg></button>
      <button class="plain b4" aria-label="Calcular"><svg width="13" height="14" viewBox="0 0 13 14"><path d="M.5.5h12v13H.5zM.5 4.500h12M.5 7.500h12M.5 10.500h12M3.500 5v9M6.500 5v9M9.500 5v9M2 2.500h9" fill="none" stroke="#666"/></svg></button>
      <button class="plain b5" aria-label="Web"><svg width="14" height="14" viewBox="0 0 14 14"><circle cx="6.500" cy="6.500" r="6" fill="#4fb3cf"/><path d="M2 3c3-2 4 0 3 2S2 7 1 8M8 1c3 1 4 3 4 5" fill="none" stroke="#cdebf3" stroke-width="1.500"/><circle cx="8.500" cy="7.500" r="2.800" fill="#dff3f8" stroke="#444" stroke-width="1.300"/><path d="M10.500 10l2.500 2.500" stroke="#444" stroke-width="1.800"/></svg></button>
      <button class="plain b6" aria-label="Enviar"><svg width="16" height="12" viewBox="0 0 16 12"><path d="M2.500 3V.5h13v11h-13V9M6 4l3 3 6-6" fill="none" stroke="#666"/><path d="M0 5h7M1 7.500h5M3 3L1 5l2 2" fill="none" stroke="#0a8fa8"/></svg></button>
      <button class="plain b7 ms-auto"><svg width="14" height="14" viewBox="0 0 14 14"><circle cx="7" cy="7" r="6" fill="#fff" stroke="#5f9f00" stroke-width="1.700"/><path d="M4 6.500l2.500 2.500L10 5.500" fill="none" stroke="#5f9f00" stroke-width="2"/></svg><span><u>O</u>K</span></button>
      <button class="plain b8"><svg width="14" height="14" viewBox="0 0 14 14"><circle cx="7" cy="7" r="6" fill="#fff" stroke="#666" stroke-width="1.500"/><path d="M3 11l8-8" stroke="#666" stroke-width="1.500"/></svg><span><u>C</u>ancelar</span></button>
    </div>
  </div>
</section>
<script>
const visits=[["14.06.2019 12:30","Manuel Fustes","","Visita precupuesto"],["14.06.2019 14:30","Martín","Pedro","Informe presentacion presupuesto"],["19.06.2019 11:00","Martín","Pedro","Visita por ver el nuevo catálogo"],["19.06.2019 13:00","Martín","",""],["19.06.2019 13:00","Manuel Fustes","",""],["02.08.2019 10:30","Manuel Fustes","",""],["18.09.2019 12:00","Manuel Fustes","",""]];
const arrow=d=>`<button class="plain" tabindex="-1" aria-label="Desplazar"><svg width="8" height="6"><use href="#i-${d}"/></svg></button>`;
document.getElementById("rows").innerHTML=visits.map((v,i)=>`<tr class="${i?"":"sel"}"><td class="rh">${i?"":'<svg class="ms-1" width="5" height="8" viewBox="0 0 5 8"><path d="M0 0h1l4 4-4 4H0z"/></svg>'}</td><td class="${i?"":"cur"}">${i?v[0]:`<mark>${v[0]}</mark>`}</td><td>${v[1]}</td><td>${v[2]}</td><td></td><td>Agendada</td><td class="inf">${v[3]}</td><td class="sc">${arrow("up")}${arrow("down")}</td><td class="void"></td></tr>`).join("");
</script>
<script src="https://cdn.jsdelivr.net/npm/bootstrap@5.3.0/dist/js/bootstrap.bundle.min.js"></script>
</body>
</html>
